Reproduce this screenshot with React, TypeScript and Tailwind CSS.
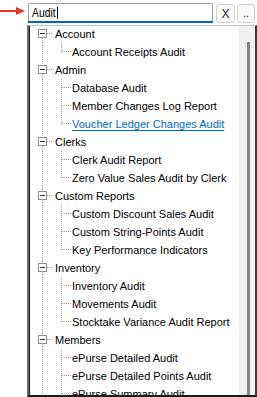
import React from "react";

type Group = { label: string; children: string[] };

const tree: Group[] = [
  { label: "Account", children: ["Account Receipts Audit"] },
  {
    label: "Admin",
    children: ["Database Audit", "Member Changes Log Report", "Voucher Ledger Changes Audit"],
  },
  { label: "Clerks", children: ["Clerk Audit Report", "Zero Value Sales Audit by Clerk"] },
  {
    label: "Custom Reports",
    children: ["Custom Discount Sales Audit", "Custom String-Points Audit", "Key Performance Indicators"],
  },
  {
    label: "Inventory",
    children: ["Inventory Audit", "Movements Audit", "Stocktake Variance Audit Report"],
  },
  {
    label: "Members",
    children: ["ePurse Detailed Audit", "ePurse Detailed Points Audit", "ePurse Summary Audit"],
  },
];

const DOT = "#a0a0a0";

function RootConnector({ first }: { first: boolean }) {
  return (
    <svg width={24} height={18} className="block shrink-0">
      {!first && <line x1={12.5} y1={0} x2={12.5} y2={4} stroke={DOT} strokeDasharray="1 1" />}
      <line x1={12.5} y1={13} x2={12.5} y2={18} stroke={DOT} strokeDasharray="1 1" />
      <line x1={17} y1={8.5} x2={23} y2={8.5} stroke={DOT} strokeDasharray="1 1" />
      <rect x={8.5} y={4.5} width={8} height={8} fill="#fff" stroke="#8f8f8f" />
      <line x1={10} y1={8.5} x2={15} y2={8.5} stroke="#3a3a3a" />
    </svg>
  );
}

function ChildConnector({ last }: { last: boolean }) {
  return (
    <svg width={42} height={18} className="block shrink-0">
      <line x1={12.5} y1={0} x2={12.5} y2={18} stroke={DOT} strokeDasharray="1 1" />
      <line x1={31.5} y1={0} x2={31.5} y2={last ? 9 : 18} stroke={DOT} strokeDasharray="1 1" />
      <line x1={32} y1={8.5} x2={41} y2={8.5} stroke={DOT} strokeDasharray="1 1" />
    </svg>
  );
}

export default function App() {
  return (
    <div
      className="w-[257px] h-[397px] bg-white flex flex-col overflow-hidden text-black"
      style={{ fontFamily: '"Liberation Sans", Arial, sans-serif' }}
    >
      {/* Search row */}
      <div className="h-[25px] flex items-start shrink-0">
        <svg width={28} height={25} className="block shrink-0">
          <line x1={0} y1={11} x2={18} y2={11} stroke="#e4332b" strokeWidth={2} />
          <polygon points="16,7 25,11 16,15" fill="#e4332b" />
        </svg>
        <div className="mt-[3px] w-[185px] h-[20px] border border-[#9a9a9a] border-b-0 rounded-t-[2px] flex flex-col">
          <div className="flex-1 flex items-center pl-[3px] bg-white">
            <span className="text-[13px] leading-none origin-left scale-x-[0.8] inline-block whitespace-nowrap">
              Audit
            </span>
            <span className="w-px h-[12px] bg-black -ml-[5px]" />
          </div>
          <div className="h-[2px] bg-[#0067c0] -mx-px" />
        </div>
        <button className="mt-[4px] ml-[3px] w-[19px] h-[19px] rounded-[3px] border border-[#cfcfcf] bg-[#fbfbfb] flex items-center justify-center text-[12px] leading-none text-[#1a1a1a]">
          X
        </button>
        <button className="mt-[4px] ml-[2px] w-[18px] h-[19px] rounded-[3px] border border-[#cfcfcf] bg-[#fbfbfb] flex items-end justify-center pb-[3px] text-[11px] leading-none text-[#1a1a1a]">
          ..
        </button>
      </div>

      {/* Tree panel */}
      <div className="ml-[27px] flex-1 min-h-0 border-l-2 border-l-[#6b6b6b] border-t border-t-[#c4c4c4] border-r-2 border-r-[#3a3a3a] border-b-2 border-b-[#1a1a1a] flex">
        <div className="flex-1 min-w-0 border-l border-l-[#141414] overflow-hidden">
          <div className="flex flex-col -mt-px">
            {tree.map((g, gi) => (
              <React.Fragment key={g.label}>
                <div className="h-[18px] flex items-center">
                  <RootConnector first={gi === 0} />
                  <span className="text-[11px] leading-[18px] whitespace-nowrap pl-[1px]">{g.label}</span>
                </div>
                {g.children.map((c, ci) => {
                  const hover = c === "Voucher Ledger Changes Audit";
                  return (
                    <div key={c} className="h-[18px] flex items-center">
                      <ChildConnector last={ci === g.children.length - 1} />
                      <span
                        className={
                          "text-[11px] leading-[18px] whitespace-nowrap " +
                          (hover ? "text-[#0066cc] underline underline-offset-[2px]" : "")
                        }
                      >
                        {c}
                      </span>
                    </div>
                  );
                })}
              </React.Fragment>
            ))}
          </div>
        </div>
        {/* Scrollbar */}
        <div className="w-[16px] shrink-0 bg-[#f0f0f0] flex justify-center pt-[16px]">
          <div className="w-[3px] h-full bg-[#858585] ml-[2px]" />
        </div>
      </div>
    </div>
  );
}
